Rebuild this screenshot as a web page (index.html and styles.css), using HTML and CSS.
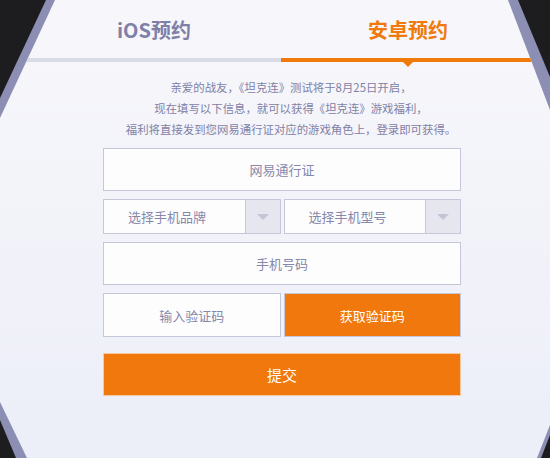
FILE: index.html
```html
<!DOCTYPE html>
<html lang="zh-CN">
<head>
  <meta charset="UTF-8" />
  <meta name="viewport" content="width=device-width, initial-scale=1.0"/>
  <title>坦克连 预约</title>
  <link rel="stylesheet" href="styles.css">
</head>
<body>

  <div class="frame">
    <div class="panel">

      <!-- TABS -->
      <div class="tabs">
        <div class="tab">iOS预约</div>
        <div class="tab active">安卓预约</div>
      </div>

      <p class="intro">
        亲爱的战友，《坦克连》测试将于8月25日开启，<br>
        现在填写以下信息，就可以获得《坦克连》游戏福利，<br>
        福利将直接发到您网易通行证对应的游戏角色上，登录即可获得。
      </p>

      <!-- FORM -->
      <div class="form">
        <input class="field" type="text" placeholder="网易通行证" />

        <div class="row">
          <div class="select">
            <span class="select-text">选择手机品牌</span>
            <span class="select-arrow"></span>
          </div>
          <div class="select">
            <span class="select-text">选择手机型号</span>
            <span class="select-arrow"></span>
          </div>
        </div>

        <input class="field" type="text" placeholder="手机号码" />

        <div class="row">
          <input class="field code-input" type="text" placeholder="输入验证码" />
          <button class="code-btn">获取验证码</button>
        </div>

        <button class="submit-btn">提交</button>
      </div>

    </div>
  </div>

</body>
</html>
```

FILE: styles.css
```css
body {
  margin: 0;
  background-color: #1d1d1f;
  font-family: "Noto Sans CJK SC", "Noto Sans", sans-serif;
}

.frame {
  width: 550px;
  height: 458px;
  background-color: #8c8eb4;
  clip-path: polygon(46px 0, 518px 0, 550px 77px, 550px 435px, 541px 458px, 16px 458px, 0 420px, 0 98px);
}

.panel {
  height: 100%;
  background: linear-gradient(180deg, #f7f7fb 0%, #f1f2f9 60%, #eceef8 100%);
  clip-path: polygon(55px 0, 508px 0, 550px 110px, 550px 425px, 537px 458px, 27px 458px, 0 402px, 0 118px);
  overflow: hidden;
}

/* tabs */
.tabs {
  display: flex;
  margin: 0 15px 0 27px;
}

.tab {
  flex: 1;
  height: 58px;
  display: flex;
  align-items: center;
  justify-content: center;
  font-size: 20px;
  font-weight: 700;
  color: #7e80a8;
  border-bottom: 4px solid #d9dbe6;
  position: relative;
}

.tab.active {
  color: #f07a0c;
  border-bottom-color: #f07a0c;
}

.tab.active::after {
  content: "";
  position: absolute;
  left: 50%;
  bottom: -9px;
  margin-left: -5px;
  border-left: 5px solid transparent;
  border-right: 5px solid transparent;
  border-top: 5px solid #f07a0c;
}

.intro {
  margin: 15px 0 8px;
  padding-left: 32px;
  text-align: center;
  font-size: 11.4px;
  line-height: 21px;
  color: #7f81a6;
}

/* form */
.form {
  width: 358px;
  margin-left: 103px;
  display: flex;
  flex-direction: column;
  gap: 8px;
}

.row {
  display: flex;
  gap: 3px;
}

.field {
  box-sizing: border-box;
  width: 100%;
  height: 43px;
  margin: 0;
  padding: 0;
  border: 1px solid #c6c8da;
  background-color: #fdfdfe;
  font-family: inherit;
  font-size: 13px;
  color: #6a6c95;
  text-align: center;
  outline: none;
}

.field::placeholder {
  color: #8688ab;
}

.select {
  flex: 1;
  box-sizing: border-box;
  height: 35px;
  display: flex;
  border: 1px solid #c6c8da;
  background-color: #fdfdfe;
}

.select-text {
  flex: 1;
  display: flex;
  align-items: center;
  padding-left: 24px;
  font-size: 13px;
  color: #8688ab;
}

.select-arrow {
  width: 34px;
  display: flex;
  align-items: center;
  justify-content: center;
  background-color: #e5e6ee;
  border-left: 1px solid #c6c8da;
}

.select-arrow::before {
  content: "";
  border-left: 6px solid transparent;
  border-right: 6px solid transparent;
  border-top: 6px solid #c3c5d4;
}

.code-input {
  flex: 1;
  width: auto;
  min-width: 0;
  height: 44px;
}

.code-btn {
  flex: 1;
  min-width: 0;
  box-sizing: border-box;
  height: 44px;
  padding: 0;
  border: 1px solid #c6c8da;
  background-color: #f0780c;
  color: #ffffff;
  font-family: inherit;
  font-size: 13px;
  cursor: pointer;
}

.submit-btn {
  box-sizing: border-box;
  width: 100%;
  height: 43px;
  margin-top: 8px;
  padding: 0;
  border: 1px solid #f6c9a0;
  background-color: #f0780c;
  color: #ffffff;
  font-family: inherit;
  font-size: 15px;
  cursor: pointer;
}
```
